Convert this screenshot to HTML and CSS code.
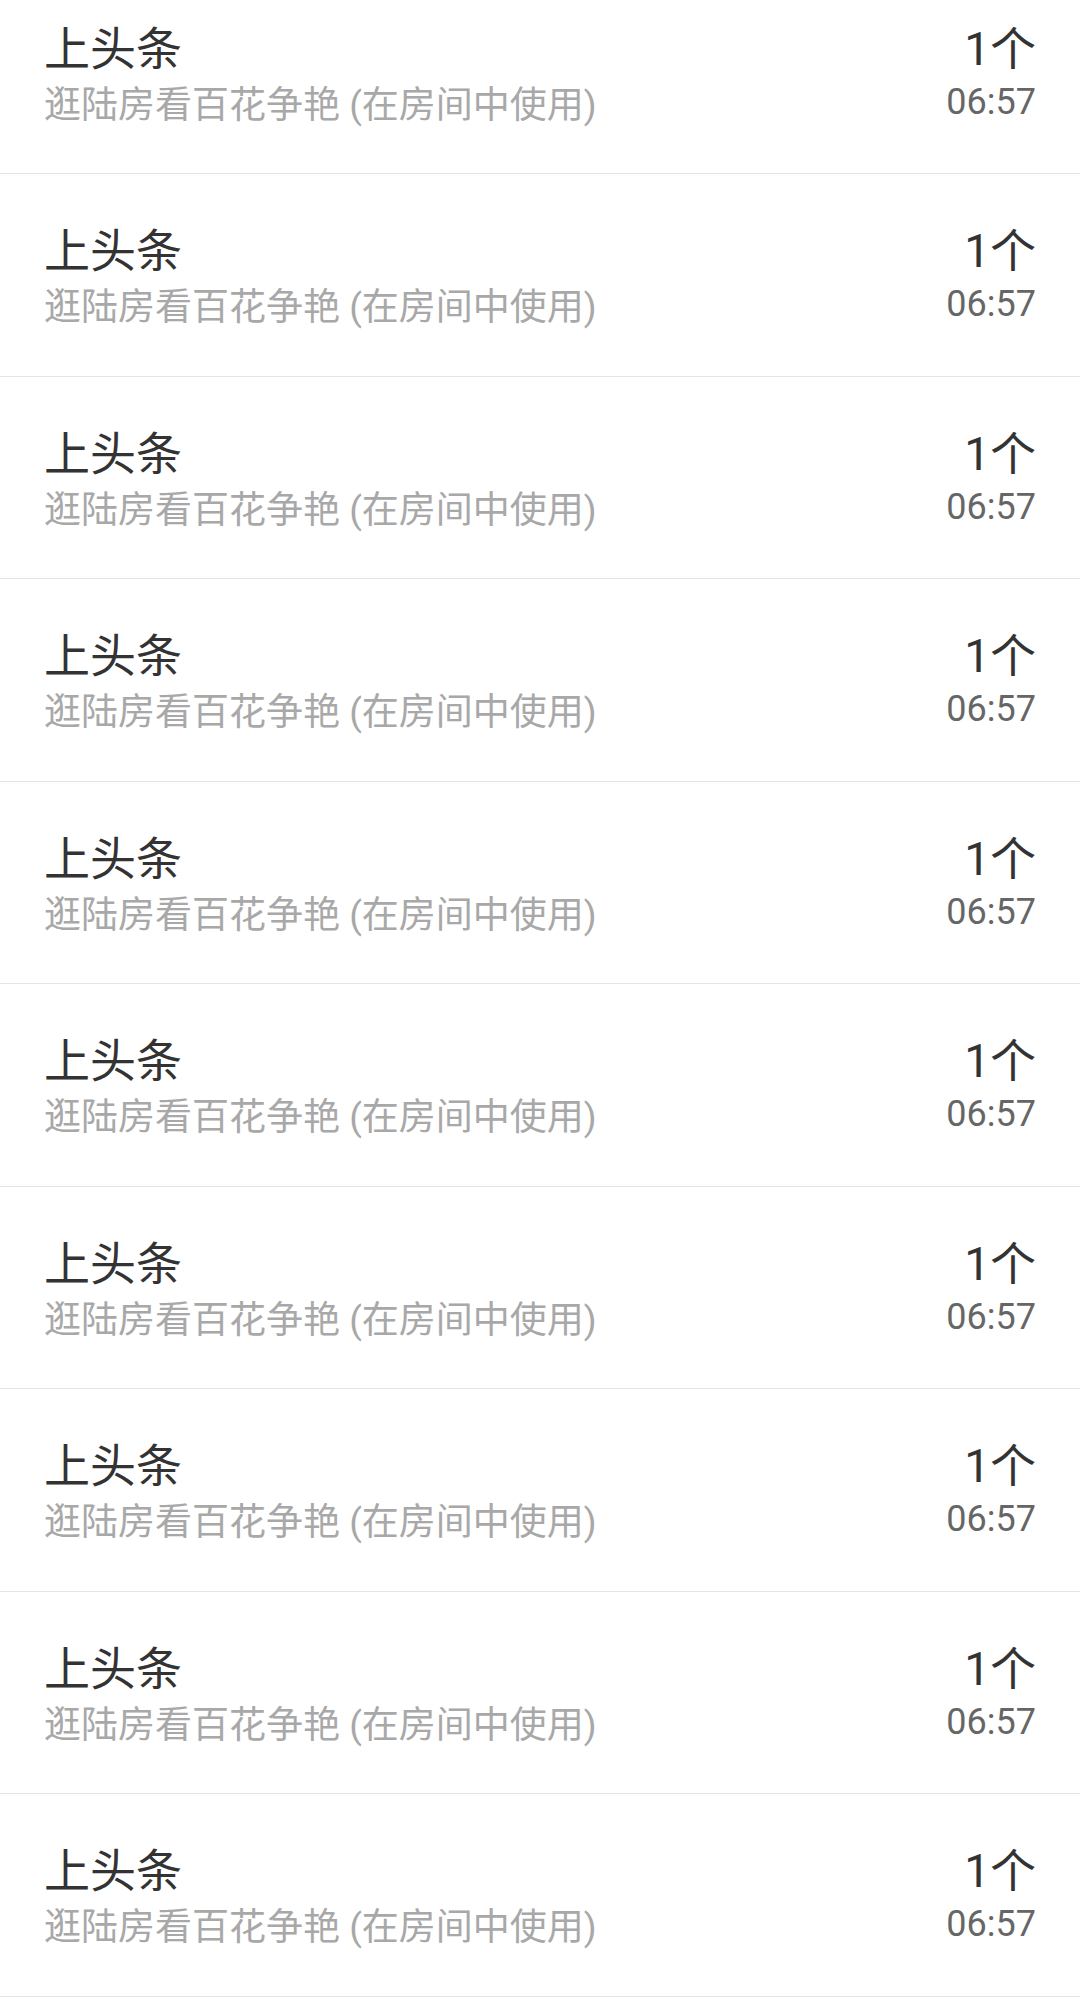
FILE: index.html
```html
<!DOCTYPE html>
<html lang="zh-CN">
<head>
<meta charset="utf-8">
<title>上头条</title>
<link rel="stylesheet" href="styles.css">
</head>
<body>
<ul class="list">
  <li class="row"><div class="info"><div class="title">上头条</div><div class="desc">逛陆房看百花争艳 (在房间中使用)</div></div><div class="meta"><div class="count">1个</div><div class="time">06:57</div></div></li>
  <li class="row"><div class="info"><div class="title">上头条</div><div class="desc">逛陆房看百花争艳 (在房间中使用)</div></div><div class="meta"><div class="count">1个</div><div class="time">06:57</div></div></li>
  <li class="row"><div class="info"><div class="title">上头条</div><div class="desc">逛陆房看百花争艳 (在房间中使用)</div></div><div class="meta"><div class="count">1个</div><div class="time">06:57</div></div></li>
  <li class="row"><div class="info"><div class="title">上头条</div><div class="desc">逛陆房看百花争艳 (在房间中使用)</div></div><div class="meta"><div class="count">1个</div><div class="time">06:57</div></div></li>
  <li class="row"><div class="info"><div class="title">上头条</div><div class="desc">逛陆房看百花争艳 (在房间中使用)</div></div><div class="meta"><div class="count">1个</div><div class="time">06:57</div></div></li>
  <li class="row"><div class="info"><div class="title">上头条</div><div class="desc">逛陆房看百花争艳 (在房间中使用)</div></div><div class="meta"><div class="count">1个</div><div class="time">06:57</div></div></li>
  <li class="row"><div class="info"><div class="title">上头条</div><div class="desc">逛陆房看百花争艳 (在房间中使用)</div></div><div class="meta"><div class="count">1个</div><div class="time">06:57</div></div></li>
  <li class="row"><div class="info"><div class="title">上头条</div><div class="desc">逛陆房看百花争艳 (在房间中使用)</div></div><div class="meta"><div class="count">1个</div><div class="time">06:57</div></div></li>
  <li class="row"><div class="info"><div class="title">上头条</div><div class="desc">逛陆房看百花争艳 (在房间中使用)</div></div><div class="meta"><div class="count">1个</div><div class="time">06:57</div></div></li>
  <li class="row"><div class="info"><div class="title">上头条</div><div class="desc">逛陆房看百花争艳 (在房间中使用)</div></div><div class="meta"><div class="count">1个</div><div class="time">06:57</div></div></li>
</ul>
</body>
</html>
```

FILE: styles.css
```css
html, body {
  margin: 0;
  padding: 0;
  background: #ffffff;
  overflow: hidden;
}

body {
  font-family: Roboto, "Noto Sans CJK SC", "Noto Sans", sans-serif;
  color: #333333;
}

.list {
  list-style: none;
  margin: -28.5px 0 0 0;
  padding: 0;
}

.row {
  box-sizing: border-box;
  height: 202.5px;
  padding: 46px 44px 0 44px;
  border-bottom: 1px solid #e4e4e4;
  display: flex;
  justify-content: space-between;
  align-items: flex-start;
}

.info {
  display: flex;
  flex-direction: column;
}

.title {
  font-size: 46px;
  line-height: 62px;
  color: #333333;
}

.desc {
  font-size: 37px;
  line-height: 52px;
  color: #a8a8a8;
}

.meta {
  display: flex;
  flex-direction: column;
  align-items: flex-end;
}

.count {
  font-size: 46px;
  line-height: 62px;
  color: #333333;
}

.time {
  font-size: 36px;
  line-height: 44px;
  color: #666666;
}
```
